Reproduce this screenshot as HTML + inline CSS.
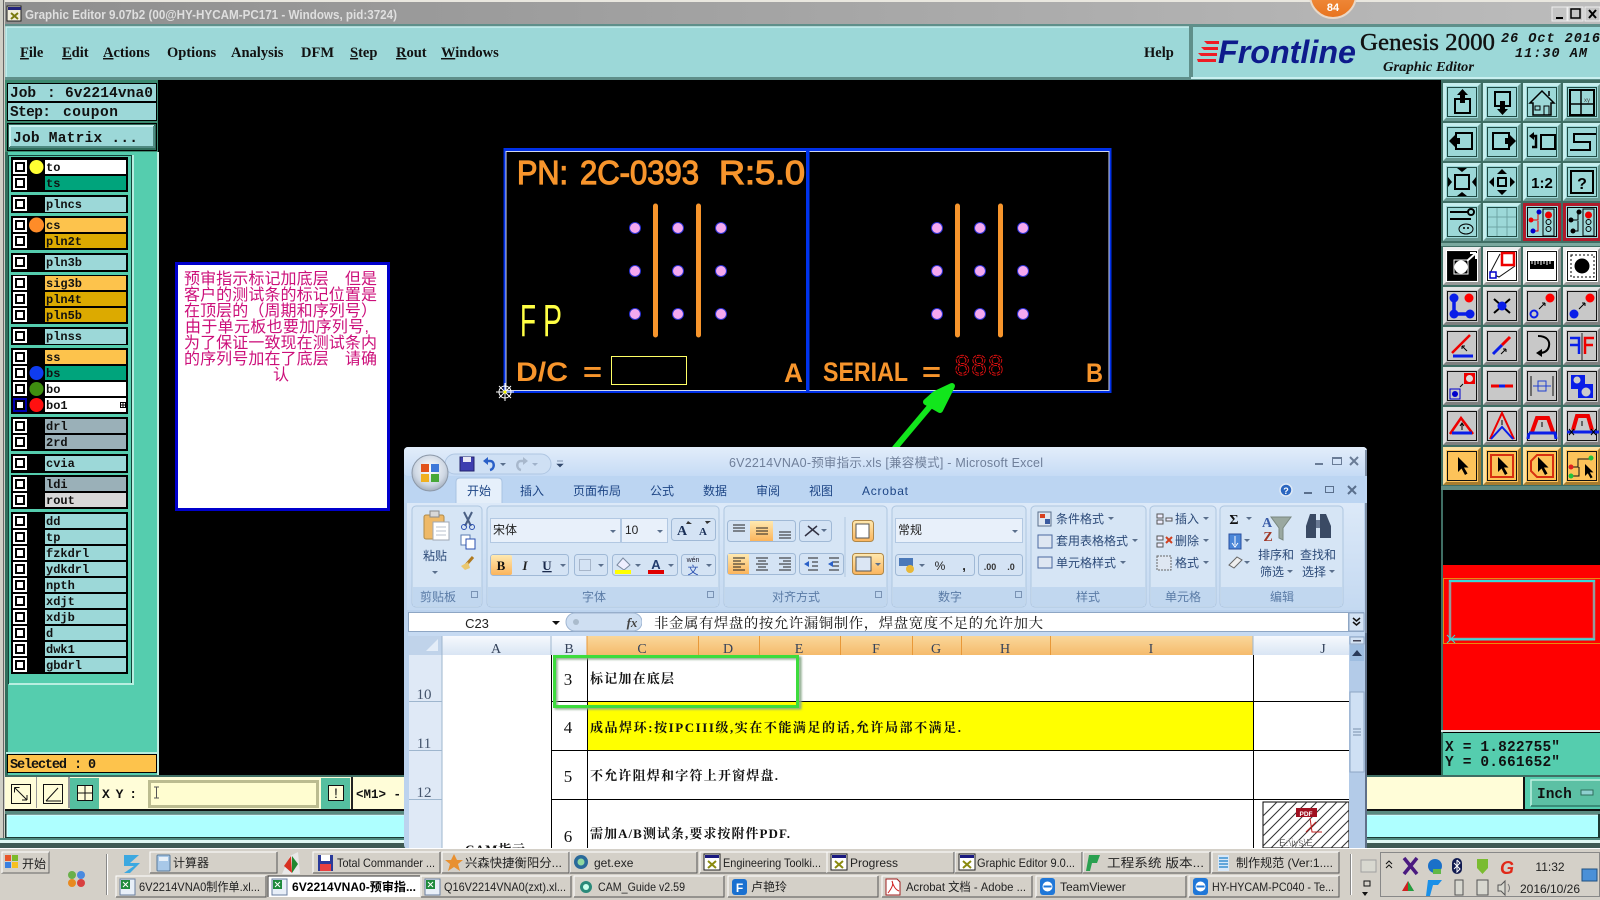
<!DOCTYPE html>
<html><head><meta charset="utf-8"><title>Graphic Editor</title>
<style>
html,body{margin:0;padding:0;background:#000;width:1600px;height:900px;overflow:hidden}
svg{display:block}
.s{font-family:"Liberation Sans","Noto Sans CJK SC",sans-serif}
.r{font-family:"Liberation Serif","Noto Serif CJK SC",serif}
.m{font-family:"Liberation Mono",monospace;font-weight:bold}
.lay{font-family:"Liberation Mono",monospace;font-weight:bold;font-size:12px;fill:#111}
.menu{font-family:"Liberation Serif",serif;font-weight:bold;font-size:14.5px;fill:#111}
.tb{font-family:"Liberation Sans","Noto Sans CJK SC",sans-serif;font-size:12px;fill:#222}
.rb{font-family:"Liberation Sans","Noto Sans CJK SC",sans-serif;font-size:12px;fill:#2c4a78}
.gl{font-family:"Liberation Sans","Noto Sans CJK SC",sans-serif;font-size:12px;fill:#5a7ba6;text-anchor:middle}
.tab{font-family:"Liberation Sans","Noto Sans CJK SC",sans-serif;font-size:12px;fill:#1d4585;text-anchor:middle}
.col{font-family:"Liberation Serif",serif;font-size:14px;fill:#34425a;text-anchor:middle}
.cell{font-family:"Liberation Serif","Noto Serif CJK SC",serif;font-weight:bold;font-size:13px;fill:#111}
.num{font-family:"Liberation Serif",serif;font-size:17px;fill:#111;text-anchor:middle}
.rh{font-family:"Liberation Serif",serif;font-size:15px;fill:#44546c;text-anchor:middle}
.note{font-family:"Liberation Sans","Noto Sans CJK SC",sans-serif;font-size:16px;fill:#cc0f7a}
.pcb{font-family:"Liberation Sans",sans-serif;font-weight:bold;fill:#f7952c}
</style></head><body>
<svg xmlns="http://www.w3.org/2000/svg" xmlns:xlink="http://www.w3.org/1999/xlink" width="1600" height="900" viewBox="0 0 1600 900">
<defs>
<linearGradient id="tg" x1="0" x2="1" y1="0" y2="0"><stop offset="0" stop-color="#8e8e8e"/><stop offset="1" stop-color="#bcbcbc"/></linearGradient>
<linearGradient id="xt" x1="0" x2="0" y1="0" y2="1"><stop offset="0" stop-color="#e2edfa"/><stop offset="1" stop-color="#c6dbf5"/></linearGradient>
<linearGradient id="rib" x1="0" x2="0" y1="0" y2="1"><stop offset="0" stop-color="#dce9f8"/><stop offset="1" stop-color="#c4d9f1"/></linearGradient>
<linearGradient id="og" x1="0" x2="0" y1="0" y2="1"><stop offset="0" stop-color="#ffe9b0"/><stop offset="1" stop-color="#fbb45c"/></linearGradient>
<linearGradient id="ch" x1="0" x2="0" y1="0" y2="1"><stop offset="0" stop-color="#f6f9fd"/><stop offset="1" stop-color="#d9e5f4"/></linearGradient>
<linearGradient id="cho" x1="0" x2="0" y1="0" y2="1"><stop offset="0" stop-color="#fad79a"/><stop offset="1" stop-color="#f5bb6c"/></linearGradient>
<linearGradient id="badge" x1="0" x2="0" y1="0" y2="1"><stop offset="0" stop-color="#f7a35a"/><stop offset="1" stop-color="#e8731e"/></linearGradient>
<radialGradient id="orb" cx=".5" cy=".4" r=".7"><stop offset="0" stop-color="#ffffff"/><stop offset=".6" stop-color="#cfd8e4"/><stop offset="1" stop-color="#8b97a6"/></radialGradient>
<filter id="gs" x="-5%" y="-10%" width="110%" height="125%"><feGaussianBlur stdDeviation="1"/></filter>
<g id="bT"><rect width="38" height="38" fill="#9cd8d8"/><path d="M0 38V0H38L35 3H3V35Z" fill="#c6eeee"/><path d="M38 0V38H0L3 35H35V3Z" fill="#6a9a94"/><rect x="4.500" y="4.500" width="29" height="29" fill="none" stroke="#1f4a44"/></g>
<g id="bG"><rect width="38" height="38" fill="#c8c8c8"/><path d="M0 38V0H38L35 3H3V35Z" fill="#e4e4e4"/><path d="M38 0V38H0L3 35H35V3Z" fill="#808080"/><rect x="4.500" y="4.500" width="29" height="29" fill="none" stroke="#111"/></g>
<g id="bO"><rect width="38" height="38" fill="#fdc35a"/><path d="M0 38V0H38L35 3H3V35Z" fill="#fde0a0"/><path d="M38 0V38H0L3 35H35V3Z" fill="#a67c30"/><rect x="4.500" y="4.500" width="29" height="29" fill="none" stroke="#111"/></g>
<g id="bW"><rect width="38" height="38" fill="#fff"/><path d="M0 38V0H38L35 3H3V35Z" fill="#eee"/><path d="M38 0V38H0L3 35H35V3Z" fill="#999"/><rect x="4.500" y="4.500" width="29" height="29" fill="none" stroke="#111"/></g>
<g id="ck"><rect width="14" height="14" fill="#fff"/><rect x="2" y="2" width="10" height="10" fill="#000"/><rect x="4" y="4" width="6" height="6" fill="#fff"/></g>
<path id="ptr" d="M0 0V15L3.500 11.500L7 18L9.500 16.500L6 10.500H10.500Z" fill="#000"/>
<g id="tbb"><rect width="127" height="21" fill="#d4d0c8"/><path d="M0 21V0H127" fill="none" stroke="#fff"/><path d="M127 0V21H0" fill="none" stroke="#555"/></g>
<g id="tbl"><rect width="150" height="21" fill="#d4d0c8"/><path d="M0 21V0H150" fill="none" stroke="#fff"/><path d="M150 0V21H0" fill="none" stroke="#555"/></g>
<g id="xl"><rect width="15" height="16" fill="#e8eff8" stroke="#6a7fa0"/><rect x="1" y="1" width="9" height="9" fill="#1e8b3c"/><path d="M3 3L8 8M8 3L3 8" stroke="#fff"/></g>
<g id="gex"><rect width="16" height="16" fill="#fff" stroke="#222"/><rect x="1" y="1" width="14" height="3" fill="#1a1a80"/><path d="M4 7L12 14M12 7L4 14" stroke="#8a8a10" stroke-width="2"/></g>
<g id="tv"><rect width="15" height="17" rx="3" fill="#1f77d8"/><circle cx="7.500" cy="8.500" r="5" fill="#fff"/><path d="M3.500 8.500H11.500" stroke="#1f77d8" stroke-width="2"/></g>
<path id="dd" d="M0 0H6L3 3Z" fill="#5a6f8c"/>
</defs>

<!-- base -->
<rect width="1600" height="900" fill="#000"/>
<rect width="1600" height="2" fill="#e9e7df"/>
<rect y="2" width="1600" height="23" fill="url(#tg)"/>
<rect x="0" y="0" width="5" height="848" fill="#cfcfc6"/>
<rect x="3" y="0" width="1" height="848" fill="#666"/>
<g transform="translate(7,6)"><rect width="14" height="15" fill="#f2eedc" stroke="#222"/><rect x="1" y="1" width="13" height="3" fill="#22227a"/><path d="M4 7L11 13M11 7L4 13" stroke="#7a7a10" stroke-width="2"/></g>
<text x="25" y="19" class="s" font-size="12.500" font-weight="bold" fill="#dfdfdf" textLength="372" lengthAdjust="spacingAndGlyphs">Graphic Editor 9.07b2 (00@HY-HYCAM-PC171 - Windows, pid:3724)</text>
<!-- window buttons -->
<g transform="translate(1552,7)"><rect width="15" height="14" fill="#c4c4c4" stroke="#eee"/><rect x="4" y="10" width="7" height="2" fill="#000"/><rect x="16" width="15" height="14" fill="#c4c4c4" stroke="#eee"/><rect x="19" y="2" width="9" height="9" fill="none" stroke="#000" stroke-width="1.500"/><rect x="33" width="15" height="14" fill="#c4c4c4" stroke="#eee"/><path d="M37 3L44 11M44 3L37 11" stroke="#000" stroke-width="2"/></g>
<!-- badge -->
<circle cx="1333" cy="-5" r="23" fill="url(#badge)" stroke="#e8d8c8" stroke-width="2"/>
<text x="1333" y="11" class="s" font-size="11" font-weight="bold" fill="#fff" text-anchor="middle">84</text>

<!-- menu -->
<rect x="5" y="24" width="1595" height="56" fill="#5f8f8a"/>
<rect x="6" y="27" width="1183" height="50" fill="#9cd8d8"/>
<path d="M6 77V27H1189" fill="none" stroke="#c9f0f0" stroke-width="1.500"/>
<rect x="1193" y="27" width="407" height="50" fill="#9cd8d8"/>
<rect x="1191" y="77" width="409" height="2" fill="#c9f0f0"/>
<rect x="6" y="77" width="1183" height="2" fill="#5f8f8a"/>
<g class="menu">
<text x="20" y="57"><tspan text-decoration="underline">F</tspan>ile</text>
<text x="62" y="57"><tspan text-decoration="underline">E</tspan>dit</text>
<text x="103" y="57"><tspan text-decoration="underline">A</tspan>ctions</text>
<text x="167" y="57">Options</text>
<text x="231" y="57">Analysis</text>
<text x="301" y="57">DFM</text>
<text x="350" y="57"><tspan text-decoration="underline">S</tspan>tep</text>
<text x="396" y="57"><tspan text-decoration="underline">R</tspan>out</text>
<text x="441" y="57"><tspan text-decoration="underline">W</tspan>indows</text>
<text x="1144" y="57">Help</text>
</g>
<!-- logo -->
<path d="M1204 41H1219V44H1207ZM1201 47H1218V50H1204ZM1198 53H1217V56H1201ZM1197 59H1216V62H1198Z" fill="#ee1c25"/>
<text x="1218" y="63" class="s" font-size="32" font-weight="bold" font-style="italic" fill="#0d1b8c" textLength="138" lengthAdjust="spacingAndGlyphs">Frontline</text>
<text x="1360" y="50" class="r" font-size="24" fill="#111" stroke="#111" stroke-width=".4" textLength="135" lengthAdjust="spacingAndGlyphs">Genesis 2000</text>
<text x="1383" y="71" class="r" font-size="14" font-style="italic" font-weight="bold" fill="#111" textLength="91" lengthAdjust="spacingAndGlyphs">Graphic Editor</text>
<text x="1501" y="42" class="m" font-style="italic" font-size="13.500" fill="#111" textLength="99">26 Oct 2016</text>
<text x="1515" y="57" class="m" font-style="italic" font-size="13.500" fill="#111" textLength="72">11:30 AM</text>

<!-- left panel -->
<rect x="5" y="80" width="153" height="72" fill="#3c8a70"/>
<rect x="7.500" y="83.500" width="149" height="18" fill="#9cd8d8" stroke="#000"/>
<rect x="7.500" y="102.500" width="149" height="18" fill="#9cd8d8" stroke="#000"/>
<text x="10" y="97" class="m" font-size="14.500" fill="#111">Job</text><text x="47" y="97" class="m" font-size="14.500" fill="#111">:</text><text x="65" y="97" class="m" font-size="14.500" fill="#111" textLength="88">6v2214vna0</text>
<text x="10" y="116" class="m" font-size="14.500" fill="#111" textLength="41">Step:</text><text x="63" y="116" class="m" font-size="14.500" fill="#111" textLength="55">coupon</text>
<rect x="7.500" y="123.500" width="149" height="27" fill="#2f6e5c" stroke="#000"/>
<rect x="10" y="126" width="144" height="21" fill="#9cd8d8"/><path d="M10 147V126H154" fill="none" stroke="#c9f0f0" stroke-width="2"/><path d="M154 126V147H10" fill="none" stroke="#4f8a82" stroke-width="2"/>
<text x="13" y="142" class="m" font-size="14.500" fill="#111" textLength="125">Job Matrix ...</text>

<rect x="5" y="152" width="153" height="625" fill="#55cdae"/>
<rect x="5" y="152" width="3" height="625" fill="#2f6e5c"/>
<rect x="157" y="152" width="2" height="625" fill="#c0ece0"/>
<path d="M8.500 683.500V155.500H131.500V683.500Z" fill="#55cdae" stroke="#15443a"/>
<rect x="132" y="155" width="2" height="529" fill="#b8eee0"/>
<rect x="9" y="683" width="125" height="2" fill="#b8eee0"/>
<rect x="6" y="752" width="152" height="2" fill="#b8eee0"/>
<rect x="7.500" y="754.500" width="149" height="18" fill="#fdc34c" stroke="#000"/>
<text x="10" y="768" class="m" font-size="13.500" fill="#111" textLength="57">Selected</text><text x="74" y="768" class="m" font-size="13.500" fill="#111">:</text><text x="88" y="768" class="m" font-size="13.500" fill="#111">0</text>

<!-- layer groups -->
<g fill="#000">
<rect x="11" y="157" width="117" height="35"/><rect x="11" y="195" width="117" height="18"/><rect x="11" y="216" width="117" height="34"/><rect x="11" y="253" width="117" height="19"/><rect x="11" y="275" width="117" height="49"/><rect x="11" y="327" width="117" height="18"/><rect x="11" y="348" width="117" height="66"/><rect x="11" y="417" width="117" height="34"/><rect x="11" y="454" width="117" height="19"/><rect x="11" y="475" width="117" height="34"/><rect x="11" y="512" width="117" height="162"/>
</g>
<g>
<rect x="45" y="160" width="81" height="14" fill="#fff"/><rect x="45" y="176" width="81" height="14" fill="#00a47c"/>
<rect x="45" y="197" width="81" height="15" fill="#9cd8d8"/>
<rect x="45" y="218" width="81" height="14" fill="#fdc34c"/><rect x="45" y="234" width="81" height="14" fill="#dcaa00"/>
<rect x="45" y="255" width="81" height="15" fill="#9cd8d8"/>
<rect x="45" y="276" width="81" height="14" fill="#fdc34c"/><rect x="45" y="292" width="81" height="14" fill="#dcaa00"/><rect x="45" y="308" width="81" height="14" fill="#dcaa00"/>
<rect x="45" y="329" width="81" height="15" fill="#9cd8d8"/>
<rect x="45" y="350" width="81" height="14" fill="#fdc34c"/><rect x="45" y="366" width="81" height="14" fill="#00a47c"/><rect x="45" y="382" width="81" height="14" fill="#fff"/><rect x="45" y="398" width="81" height="14" fill="#fff"/>
<rect x="45" y="419" width="81" height="14" fill="#9ab0b8"/><rect x="45" y="435" width="81" height="14" fill="#9ab0b8"/>
<rect x="45" y="456" width="81" height="15" fill="#9cd8d8"/>
<rect x="45" y="477" width="81" height="14" fill="#9ab0b8"/><rect x="45" y="493" width="81" height="14" fill="#d8d8d8"/>
<rect x="45" y="514" width="81" height="14" fill="#9cd8d8"/><rect x="45" y="530" width="81" height="14" fill="#9cd8d8"/><rect x="45" y="546" width="81" height="14" fill="#9cd8d8"/><rect x="45" y="562" width="81" height="14" fill="#9cd8d8"/><rect x="45" y="578" width="81" height="14" fill="#9cd8d8"/><rect x="45" y="594" width="81" height="14" fill="#9cd8d8"/><rect x="45" y="610" width="81" height="14" fill="#9cd8d8"/><rect x="45" y="626" width="81" height="14" fill="#9cd8d8"/><rect x="45" y="642" width="81" height="14" fill="#9cd8d8"/><rect x="45" y="658" width="81" height="14" fill="#9cd8d8"/>
</g>
<g>
<use xlink:href="#ck" x="13" y="160"/><use xlink:href="#ck" x="13" y="176"/><use xlink:href="#ck" x="13" y="197"/><use xlink:href="#ck" x="13" y="218"/><use xlink:href="#ck" x="13" y="234"/><use xlink:href="#ck" x="13" y="255"/><use xlink:href="#ck" x="13" y="276"/><use xlink:href="#ck" x="13" y="292"/><use xlink:href="#ck" x="13" y="308"/><use xlink:href="#ck" x="13" y="329"/><use xlink:href="#ck" x="13" y="350"/><use xlink:href="#ck" x="13" y="366"/><use xlink:href="#ck" x="13" y="382"/>
<rect x="13" y="398" width="14" height="14" fill="#0000b0"/><rect x="15" y="400" width="10" height="10" fill="#000"/><rect x="17" y="402" width="6" height="6" fill="#fff"/>
<use xlink:href="#ck" x="13" y="419"/><use xlink:href="#ck" x="13" y="435"/><use xlink:href="#ck" x="13" y="456"/><use xlink:href="#ck" x="13" y="477"/><use xlink:href="#ck" x="13" y="493"/><use xlink:href="#ck" x="13" y="514"/><use xlink:href="#ck" x="13" y="530"/><use xlink:href="#ck" x="13" y="546"/><use xlink:href="#ck" x="13" y="562"/><use xlink:href="#ck" x="13" y="578"/><use xlink:href="#ck" x="13" y="594"/><use xlink:href="#ck" x="13" y="610"/><use xlink:href="#ck" x="13" y="626"/><use xlink:href="#ck" x="13" y="642"/><use xlink:href="#ck" x="13" y="658"/>
</g>
<circle cx="36.500" cy="167" r="7" fill="#ffff33"/><circle cx="36.500" cy="225" r="7.500" fill="#ff8c28"/><circle cx="36.500" cy="373" r="7" fill="#0f3cf0"/><circle cx="36.500" cy="389" r="7" fill="#3f8f10"/><circle cx="36.500" cy="405" r="7" fill="#ff1010"/>
<g class="lay">
<text x="46" y="171">to</text><text x="46" y="187">ts</text><text x="46" y="208">plncs</text><text x="46" y="229">cs</text><text x="46" y="245">pln2t</text><text x="46" y="266">pln3b</text><text x="46" y="287">sig3b</text><text x="46" y="303">pln4t</text><text x="46" y="319">pln5b</text><text x="46" y="340">plnss</text><text x="46" y="361">ss</text><text x="46" y="377">bs</text><text x="46" y="393">bo</text><text x="46" y="409">bo1</text><text x="46" y="430">drl</text><text x="46" y="446">2rd</text><text x="46" y="467">cvia</text><text x="46" y="488">ldi</text><text x="46" y="504">rout</text><text x="46" y="525">dd</text><text x="46" y="541">tp</text><text x="46" y="557">fzkdrl</text><text x="46" y="573">ydkdrl</text><text x="46" y="589">npth</text><text x="46" y="605">xdjt</text><text x="46" y="621">xdjb</text><text x="46" y="637">d</text><text x="46" y="653">dwk1</text><text x="46" y="669">gbdrl</text>
</g>
<path d="M120.500 402.500h5v5h-5zM123 402.500v5M120.500 405h5" fill="none" stroke="#000"/>

<!-- PCB board -->
<rect x="505" y="149.500" width="605" height="242" fill="none" stroke="#0030e8" stroke-width="3"/>
<rect x="506" y="151.500" width="603" height="239" fill="none" stroke="#cfd6ee" stroke-width="1"/>
<rect x="806" y="151" width="3.500" height="240" fill="#0033ee"/>
<g class="pcb" font-size="33" stroke="#f7952c" stroke-width="1.200" style="font-weight:normal">
<text x="517" y="184" textLength="51" lengthAdjust="spacingAndGlyphs">PN:</text>
<text x="580" y="184" textLength="119" lengthAdjust="spacingAndGlyphs">2C-0393</text>
<text x="719" y="184" textLength="86" lengthAdjust="spacingAndGlyphs">R:5.0</text>
</g>
<text x="520" y="336" class="s" font-size="45" fill="#ffff44" textLength="16" lengthAdjust="spacingAndGlyphs">F</text>
<text x="543" y="336" class="s" font-size="45" fill="#ffff44" textLength="19" lengthAdjust="spacingAndGlyphs">P</text>
<g class="pcb" font-size="27">
<text x="516" y="381" textLength="52" lengthAdjust="spacingAndGlyphs">D/C</text>
<text x="583" y="381" textLength="19" lengthAdjust="spacingAndGlyphs">=</text>
<text x="784" y="382" textLength="19" lengthAdjust="spacingAndGlyphs">A</text>
<text x="823" y="381" textLength="85" lengthAdjust="spacingAndGlyphs">SERIAL</text>
<text x="922" y="381" textLength="19" lengthAdjust="spacingAndGlyphs">=</text>
<text x="1086" y="382" textLength="17" lengthAdjust="spacingAndGlyphs">B</text>
</g>
<rect x="611.500" y="356.500" width="75" height="28" fill="none" stroke="#ffff66"/>
<text x="954" y="375" class="m" font-size="30" fill="none" stroke="#e01010" stroke-width="1" stroke-dasharray="4 1" textLength="50" lengthAdjust="spacingAndGlyphs" style="font-weight:normal">888</text>
<g fill="#f4a8ef" stroke="#2a30d0" stroke-width="1">
<circle cx="635" cy="228" r="5.500"/><circle cx="678" cy="228" r="5.500"/><circle cx="721" cy="228" r="5.500"/>
<circle cx="635" cy="271" r="5.500"/><circle cx="678" cy="271" r="5.500"/><circle cx="721" cy="271" r="5.500"/>
<circle cx="635" cy="314" r="5.500"/><circle cx="678" cy="314" r="5.500"/><circle cx="721" cy="314" r="5.500"/>
<circle cx="937" cy="228" r="5.500"/><circle cx="980" cy="228" r="5.500"/><circle cx="1023" cy="228" r="5.500"/>
<circle cx="937" cy="271" r="5.500"/><circle cx="980" cy="271" r="5.500"/><circle cx="1023" cy="271" r="5.500"/>
<circle cx="937" cy="314" r="5.500"/><circle cx="980" cy="314" r="5.500"/><circle cx="1023" cy="314" r="5.500"/>
</g>
<g stroke="#f7952c" stroke-width="5" stroke-linecap="round"><path d="M655.500 206V335M698.500 206V335M957.500 206V335M1000.500 206V335"/></g>
<!-- crosshair -->
<g stroke="#fff" fill="none"><circle cx="505" cy="392" r="6"/><path d="M505 383V401M496 392H514M499 386L511 398M511 386L499 398"/></g><circle cx="505" cy="392" r="1.500" fill="#ff0"/>
<!-- green arrow -->
<path d="M895 448L932 404M952 386L935 394L926 402L940 410Z" stroke="#12e61c" stroke-width="6" fill="#12e61c" stroke-linecap="round" stroke-linejoin="round"/>

<!-- note -->
<rect x="176.500" y="263.500" width="212" height="246" fill="#fff" stroke="#0000cc" stroke-width="3"/>
<g class="note">
<text x="184" y="284" textLength="193">预审指示标记加底层　但是</text>
<text x="184" y="300" textLength="193">客户的测试条的标记位置是</text>
<text x="184" y="316" textLength="193">在顶层的（周期和序列号）</text>
<text x="185" y="332" textLength="184">由于单元板也要加序列号,</text>
<text x="184" y="348" textLength="193">为了保证一致现在测试条内</text>
<text x="184" y="364" textLength="193">的序列号加在了底层　请确</text>
<text x="273" y="380">认</text>
</g>

<!-- right toolbar -->
<rect x="1441" y="80" width="159" height="410" fill="#3f6e64"/>
<rect x="1441" y="243" width="159" height="3" fill="#7aa89e"/>
<rect x="1441" y="486" width="159" height="4" fill="#5f8a80"/>
<rect x="1441" y="490" width="2" height="243" fill="#3f6e64"/>
<rect x="1443" y="565" width="157" height="165" fill="#ff0000"/>
<rect x="1443.500" y="578.500" width="157" height="65" fill="none" stroke="#e88a10"/>
<rect x="1450" y="581" width="144" height="58" fill="none" stroke="#999" stroke-width="2.500"/>
<path d="M1449 581H1595M1449 639.500H1595" stroke="#3ad8d8" stroke-width="2"/>
<path d="M1447 635L1455 643M1455 635L1447 643" stroke="#3ad8d8"/>
<rect x="1441" y="730" width="159" height="2" fill="#d8e8e4"/>
<rect x="1441" y="733" width="159" height="44" fill="#55cdae"/>
<rect x="1441" y="733" width="2" height="44" fill="#2f6e5c"/>
<text x="1445" y="751" class="m" font-size="14.500" fill="#111" textLength="115">X = 1.822755"</text>
<text x="1445" y="766" class="m" font-size="14.500" fill="#111" textLength="115">Y = 0.661652"</text>

<!-- teal buttons -->
<g>
<g transform="translate(1443,83)"><use xlink:href="#bT"/><path d="M12 16H27V30H12Z" fill="none" stroke="#000" stroke-width="2"/><path d="M19.500 6L25 12H22V20H17V12H14Z"/></g>
<g transform="translate(1483,83)"><use xlink:href="#bT"/><path d="M12 9H27V23H12Z" fill="none" stroke="#000" stroke-width="2"/><path d="M19.500 32L14 26H17V18H22V26H25Z"/></g>
<g transform="translate(1523,83)"><use xlink:href="#bT"/><path d="M19 8L7 20H10V32H28V20H31ZM26 8V13" fill="none" stroke="#000" stroke-width="1.500"/><rect x="21" y="23" width="5" height="9" fill="none" stroke="#000"/><rect x="12" y="23" width="5" height="4" fill="none" stroke="#000"/></g>
<g transform="translate(1563,83)"><use xlink:href="#bT"/><rect x="7" y="7" width="24" height="25" fill="none" stroke="#000" stroke-width="2"/><path d="M7 21H31M18 7V32" stroke="#000" stroke-width="1.500"/><text x="21" y="19" font-size="6" class="s" fill="#444">xy</text></g>

<g transform="translate(1443,123)"><use xlink:href="#bT"/><path d="M13 10H29V26H13Z" fill="none" stroke="#000" stroke-width="2"/><path d="M6 18L12 12V15H17V21H12V24Z"/></g>
<g transform="translate(1483,123)"><use xlink:href="#bT"/><path d="M10 10H26V26H10Z" fill="none" stroke="#000" stroke-width="2"/><path d="M33 18L27 12V15H22V21H27V24Z"/></g>
<g transform="translate(1523,123)"><use xlink:href="#bT"/><rect x="18" y="12" width="14" height="14" fill="none" stroke="#000" stroke-width="2"/><path d="M8 13H13V24H9" fill="none" stroke="#000" stroke-width="2.500"/><path d="M6 13L11 9V17Z"/></g>
<g transform="translate(1563,123)"><use xlink:href="#bT"/><path d="M33 11H11V19H27V27H7" fill="none" stroke="#000" stroke-width="2"/></g>

<g transform="translate(1443,163)"><use xlink:href="#bT"/><rect x="12" y="12" width="14" height="14" fill="none" stroke="#000" stroke-width="2"/><path d="M14 5H24L19 9ZM14 33H24L19 29ZM5 14V24L9 19ZM33 14V24L29 19Z"/></g>
<g transform="translate(1483,163)"><use xlink:href="#bT"/><rect x="15" y="15" width="8" height="8" fill="none" stroke="#000" stroke-width="2"/><path d="M19 6L14 11H24ZM19 32L14 27H24ZM6 19L11 14V24ZM32 19L27 14V24Z"/></g>
<g transform="translate(1523,163)"><use xlink:href="#bT"/><text x="19" y="25" class="s" font-size="15" font-weight="bold" text-anchor="middle">1:2</text></g>
<g transform="translate(1563,163)"><use xlink:href="#bT"/><rect x="8" y="8" width="22" height="22" fill="none" stroke="#000" stroke-width="2"/><text x="19" y="26" class="s" font-size="16" font-weight="bold" text-anchor="middle">?</text></g>

<g transform="translate(1443,203)"><use xlink:href="#bT"/><path d="M7 9H25M7 16H28" stroke="#000" stroke-width="2"/><circle cx="28" cy="9" r="3" fill="none" stroke="#000" stroke-width="2"/><ellipse cx="23" cy="26" rx="7" ry="5" fill="none" stroke="#000"/><circle cx="21" cy="25" r="1"/><circle cx="25" cy="25" r="1"/></g>
<g transform="translate(1483,203)"><use xlink:href="#bT"/><path d="M14 5V33M24 5V33M5 14H33M5 24H33" stroke="#6fa6a6"/></g>
<g transform="translate(1523,203)"><rect width="38" height="38" fill="#b01c2c"/><rect x="3" y="3" width="32" height="32" fill="#9cd8d8"/><rect x="4.500" y="4.500" width="29" height="29" fill="none" stroke="#000"/><path d="M6 17H15V8M15 18V28H8" stroke="#e00" fill="none"/><circle cx="8" cy="17" r="2.500" fill="#e00"/><circle cx="16" cy="9" r="2.500" fill="#00c"/><circle cx="10" cy="28" r="2.500" fill="#00c"/><rect x="20" y="6" width="11" height="27" fill="none" stroke="#000"/><circle cx="25.500" cy="12" r="3.500" fill="#e00"/><circle cx="25.500" cy="19" r="2.500" fill="none" stroke="#000"/><circle cx="25.500" cy="26" r="2.500" fill="none" stroke="#000"/></g>
<g transform="translate(1563,203)"><rect width="38" height="38" fill="#b01c2c"/><rect x="3" y="3" width="32" height="32" fill="#9cd8d8"/><rect x="4.500" y="4.500" width="29" height="29" fill="none" stroke="#000"/><path d="M6 17H15V8M15 18V28H8" stroke="#000" fill="none"/><circle cx="8" cy="17" r="2.500"/><circle cx="16" cy="9" r="2.500"/><circle cx="10" cy="28" r="2.500"/><rect x="20" y="6" width="11" height="27" fill="none" stroke="#000"/><circle cx="25.500" cy="12" r="3.500" fill="#e00"/><circle cx="25.500" cy="19" r="2.500" fill="none" stroke="#000"/><circle cx="25.500" cy="26" r="2.500" fill="none" stroke="#000"/></g>
</g>
<!-- second group -->
<g>
<g transform="translate(1443,247)"><use xlink:href="#bW"/><rect x="5" y="5" width="29" height="28"/><circle cx="18" cy="20" r="6.500" fill="#fff"/><path d="M24 14L33 6M33 6H27M33 6V12" stroke="#fff" stroke-width="2" fill="none"/><rect x="11" y="13" width="14" height="14" fill="none" stroke="#fff"/></g>
<g transform="translate(1483,247)"><use xlink:href="#bW"/><path d="M17 7L7 26L16 30L32 19" fill="none" stroke="#111"/><rect x="19" y="6" width="12" height="12" fill="#fff" stroke="#e00" stroke-width="2.500"/><rect x="7" y="25" width="6" height="6" fill="#fff" stroke="#00c" stroke-width="1.500"/></g>
<g transform="translate(1523,247)"><use xlink:href="#bW"/><rect x="7" y="14" width="24" height="8"/><path d="M9 14V17M12 14V18M15 14V17M18 14V18M21 14V17M24 14V18M27 14V17" stroke="#fff"/></g>
<g transform="translate(1563,247)"><use xlink:href="#bW"/><rect x="8" y="8" width="23" height="22" fill="none" stroke="#000" stroke-dasharray="2 2"/><circle cx="19" cy="19" r="7.500"/></g>

<g transform="translate(1443,287)"><use xlink:href="#bG"/><path d="M11 11V27H27" fill="none" stroke="#0a1ee8" stroke-width="3.500"/><circle cx="11" cy="11" r="4.500" fill="#0a1ee8"/><circle cx="11" cy="27" r="4.500" fill="#0a1ee8"/><circle cx="27" cy="27" r="4.500" fill="#0a1ee8"/><circle cx="26" cy="11" r="4.500" fill="#f00"/></g>
<g transform="translate(1483,287)"><use xlink:href="#bG"/><path d="M11 12L27 26M27 12L11 26" stroke="#000" stroke-width="2"/><circle cx="19" cy="19" r="4.500" fill="#0a1ee8"/></g>
<g transform="translate(1523,287)"><use xlink:href="#bG"/><circle cx="27" cy="11" r="4.500" fill="#f00"/><circle cx="11" cy="27" r="3.500" fill="none" stroke="#0a1ee8" stroke-width="2"/><path d="M16 22L22 16M22 16H19M22 16V19" stroke="#000" fill="none"/></g>
<g transform="translate(1563,287)"><use xlink:href="#bG"/><circle cx="27" cy="11" r="4.500" fill="#f00"/><circle cx="11" cy="27" r="4.500" fill="#0a1ee8"/><path d="M16 22L22 16M22 16H19M22 16V19" stroke="#000" fill="none"/></g>

<g transform="translate(1443,327)"><use xlink:href="#bG"/><path d="M9 26L27 8" stroke="#e00" stroke-width="2.500"/><path d="M10 29H30" stroke="#0a1ee8" stroke-width="3"/><path d="M24 24L19 19M19 19H22M19 19V22" stroke="#000" fill="none"/></g>
<g transform="translate(1483,327)"><use xlink:href="#bG"/><path d="M10 27L19 18" stroke="#0a1ee8" stroke-width="3"/><path d="M19 18L27 10" stroke="#e00" stroke-width="3"/><path d="M18 27L23 22M23 22H20M23 22V25" stroke="#000" fill="none"/></g>
<g transform="translate(1523,327)"><use xlink:href="#bG"/><path d="M15 9C24 9 27 14 26 19C25 24 21 26 16 26" fill="none" stroke="#000" stroke-width="2"/><path d="M13 26L19 22V30Z"/></g>
<g transform="translate(1563,327)"><use xlink:href="#bG"/><path d="M7 11H16V27M7 18H15" fill="none" stroke="#0a1ee8" stroke-width="2.500"/><path d="M19 6V33" stroke="#222"/><path d="M31 11H22V27M22 18H30" fill="none" stroke="#e00" stroke-width="2.500"/></g>

<g transform="translate(1443,367)"><use xlink:href="#bG"/><rect x="21" y="6" width="11" height="11" fill="#e00"/><circle cx="26.500" cy="11.500" r="3.500" fill="#ddd"/><rect x="7" y="22" width="10" height="10" fill="none" stroke="#00c"/><circle cx="12" cy="27" r="3" fill="#00c"/><path d="M17 20L20 17" stroke="#000"/></g>
<g transform="translate(1483,367)"><use xlink:href="#bG"/><path d="M8 19H30" stroke="#e00" stroke-width="3"/><path d="M16 19H22" stroke="#0a1ee8" stroke-width="3"/></g>
<g transform="translate(1523,367)"><use xlink:href="#bG"/><path d="M8 9V29M30 9V29" stroke="#111"/><path d="M10 19H28" stroke="#2040d0"/><rect x="15" y="14" width="8" height="10" fill="none" stroke="#2040d0"/></g>
<g transform="translate(1563,367)"><use xlink:href="#bG"/><rect x="8" y="8" width="14" height="14" fill="#0a1ee8"/><rect x="15" y="17" width="15" height="14" fill="#0a1ee8"/><circle cx="14" cy="13" r="3.500" fill="#ccc"/><circle cx="23" cy="25" r="4.500" fill="#ccc"/></g>

<g transform="translate(1443,407)"><use xlink:href="#bG"/><path d="M7 27L18 11L30 27" fill="none" stroke="#e00" stroke-width="2.500"/><path d="M9 26H29" stroke="#0a1ee8" stroke-width="3"/><path d="M19 23V17M17 19L19 16L21 19" stroke="#000" fill="none"/></g>
<g transform="translate(1483,407)"><use xlink:href="#bG"/><path d="M7 32L19 6L31 32" fill="none" stroke="#e00" stroke-width="2"/><path d="M8 32L19 20L30 32" fill="none" stroke="#0a1ee8" stroke-width="2"/><path d="M19 18V13" stroke="#000"/></g>
<g transform="translate(1523,407)"><use xlink:href="#bG"/><path d="M9 25L14 11H25L30 25" fill="none" stroke="#e00" stroke-width="4"/><path d="M6 26H32L33 32M6 26L5 32" fill="none" stroke="#0a1ee8" stroke-width="3"/><path d="M19 20V15" stroke="#000"/></g>
<g transform="translate(1563,407)"><use xlink:href="#bG"/><path d="M10 23L14 9H25L29 23" fill="none" stroke="#e00" stroke-width="4"/><path d="M4 25H36" stroke="#0a1ee8" stroke-width="3"/><path d="M6 22L11 28M11 22L6 28M28 22L33 28M33 22L28 28" stroke="#000"/><path d="M19 19V14" stroke="#000"/></g>

<g transform="translate(1443,447)"><use xlink:href="#bO"/><use xlink:href="#ptr" x="15" y="10"/></g>
<g transform="translate(1483,447)"><use xlink:href="#bO"/><rect x="8" y="8" width="22" height="22" fill="none" stroke="#d83010" stroke-width="2"/><use xlink:href="#ptr" x="15" y="10"/></g>
<g transform="translate(1523,447)"><use xlink:href="#bO"/><path d="M14 8H30V30H14L8 24V14Z" fill="none" stroke="#d83010" stroke-width="2"/><use xlink:href="#ptr" x="15" y="10"/></g>
<g transform="translate(1563,447)"><use xlink:href="#bO"/><path d="M9 20H15V12H26" fill="none" stroke="#111"/><path d="M10 29H16V20" fill="none" stroke="#111"/><circle cx="8" cy="20" r="2.500" fill="#e02020"/><circle cx="8" cy="29" r="2.500" fill="#22c33c"/><circle cx="28" cy="11" r="2.500" fill="#22c33c"/><use xlink:href="#ptr" transform="translate(22,17) scale(.8)"/></g>
</g>

<!-- bottom bars -->
<rect x="5" y="775" width="1595" height="2" fill="#3f6e64"/>
<rect x="5" y="777" width="1595" height="32" fill="#fffdd8"/>
<rect x="5" y="809" width="1595" height="5" fill="#5a8a80"/>
<rect x="5" y="809" width="1595" height="2" fill="#111"/>
<rect x="5" y="814" width="1595" height="26" fill="#1a3a34"/>
<rect x="7" y="815" width="1591" height="22" fill="#aeffff"/>
<path d="M7 837V815H1598" fill="none" stroke="#e0ffff"/>
<rect x="0" y="838" width="1600" height="2" fill="#4f8a80"/>
<rect x="0" y="840" width="1600" height="3" fill="#e0f8f4"/>
<rect x="0" y="843" width="1600" height="5" fill="#3f5a54"/>
<rect x="36" y="777" width="1" height="31" fill="#999"/>
<rect x="68" y="777" width="2" height="31" fill="#999"/>
<g fill="none" stroke="#111"><rect x="11.500" y="784.500" width="19" height="19"/><path d="M14.500 787.500L27 800M14.500 787.500h5M14.500 787.500v5M27 800h-5M27 800v-5"/><rect x="43.500" y="784.500" width="19" height="19"/><path d="M46 801H61M46 801L58 788"/></g>
<rect x="70" y="778" width="29" height="31" fill="#55bfa0"/><rect x="77.500" y="785.500" width="15" height="15" fill="#fffdd8" stroke="#111"/><path d="M77.500 793H92.500M85 785.500V800.500" stroke="#111"/>
<text x="102" y="798" class="m" font-size="13" fill="#111" textLength="35">X Y :</text>
<rect x="149.500" y="781.500" width="168" height="25" fill="#fffdd0" stroke="#bcbc90" stroke-width="3"/>
<path d="M154 787H159M154 798H159M156.500 787V798" stroke="#555"/>
<rect x="321" y="778" width="29" height="31" fill="#55bfa0"/><rect x="328.500" y="785.500" width="15" height="15" fill="#fffdd8" stroke="#111"/><text x="336" y="798" class="s" font-size="14" fill="#111" text-anchor="middle">!</text>
<rect x="351" y="777" width="2" height="32" fill="#222"/>
<text x="356" y="798" class="m" font-size="12.500" fill="#111">&lt;M1&gt; -</text>
<rect x="1523" y="777" width="2" height="33" fill="#111"/>
<rect x="1525" y="777" width="75" height="32" fill="#55cdae"/>
<rect x="1531" y="780" width="69" height="26" fill="#5cc0a4"/><path d="M1531 806V780H1600" stroke="#c0f0e0" fill="none" stroke-width="1.500"/><path d="M1531 806H1600" stroke="#2f7a68" stroke-width="1.500"/>
<text x="1537" y="798" class="m" font-size="14.500" fill="#111">Inch</text>
<rect x="1581" y="790" width="12" height="5" fill="#8fd0d0" stroke="#2f6e5c"/>

<!-- Excel window -->
<rect x="404" y="447" width="963" height="402" rx="4" fill="#bcd3ee"/>
<rect x="404" y="447" width="963" height="29" rx="4" fill="url(#xt)"/>
<rect x="1365" y="450" width="2" height="398" fill="#7d8ea4"/>
<rect x="404" y="476" width="963" height="27" fill="#bcd5f2"/>
<!-- orb / QAT -->
<rect x="445" y="454" width="106" height="20" rx="10" fill="#cfe0f4" stroke="#afc6e2"/>
<circle cx="430" cy="473" r="18" fill="url(#orb)" stroke="#8c98a8"/>
<rect x="421" y="464" width="8" height="8" fill="#e2531a"/><rect x="431" y="464" width="8" height="8" fill="#3e78d8"/><rect x="421" y="474" width="8" height="8" fill="#f0b020"/><rect x="431" y="474" width="8" height="8" fill="#48a838"/>
<rect x="460" y="457" width="14" height="14" fill="#3e3eb0" stroke="#22226c"/><rect x="463" y="457" width="8" height="5" fill="#e8e8f4"/>
<path d="M485 461H490C495 461 495 469 490 470" fill="none" stroke="#2a60c8" stroke-width="2.500"/><path d="M483 461L488 457V465Z" fill="#2a60c8"/>
<use xlink:href="#dd" x="500" y="463"/>
<path d="M526 461H521C516 461 516 469 521 470" fill="none" stroke="#a8b8cc" stroke-width="2.500"/><path d="M528 461L523 457V465Z" fill="#a8b8cc"/>
<use xlink:href="#dd" x="532" y="463" opacity=".4"/>
<path d="M557 461H563M557 464H563L560 467Z" fill="#33496c" stroke="#33496c" stroke-width=".6"/>
<text x="729" y="467" class="s" font-size="12.500" fill="#6f7f9a" textLength="314">6V2214VNA0-预审指示.xls  [兼容模式] - Microsoft Excel</text>
<g fill="#6a7c96"><rect x="1315" y="463" width="8" height="2"/><rect x="1332.500" y="457.500" width="9" height="7" fill="none" stroke="#6a7c96"/><rect x="1332" y="457" width="10" height="2"/></g>
<path d="M1350 457L1358 465M1358 457L1350 465" stroke="#6a7c96" stroke-width="2"/>
<!-- tabs -->
<path d="M456 503V482Q456 478 460 478H498Q502 478 502 482V503Z" fill="#e6f0fb" stroke="#a9c3e2"/>
<rect x="456.500" y="500" width="45" height="4" fill="#e4eef9"/>
<text x="479" y="495" class="tab">开始</text><text x="532" y="495" class="tab">插入</text><text x="597" y="495" class="tab">页面布局</text><text x="662" y="495" class="tab">公式</text><text x="715" y="495" class="tab">数据</text><text x="768" y="495" class="tab">审阅</text><text x="821" y="495" class="tab">视图</text><text x="885" y="495" class="tab" font-size="13" textLength="46">Acrobat</text>
<circle cx="1286" cy="490" r="6" fill="#2a66c0" stroke="#dfe9f5" stroke-width="1.500"/><text x="1286" y="494" class="s" font-size="9" font-weight="bold" fill="#fff" text-anchor="middle">?</text>
<rect x="1304" y="492" width="8" height="2" fill="#5a6f8c"/><rect x="1325.500" y="486.500" width="8" height="6" fill="none" stroke="#5a6f8c"/><path d="M1348 486L1356 494M1356 486L1348 494" stroke="#5a6f8c" stroke-width="2"/>
<!-- ribbon -->
<rect x="407" y="503" width="957" height="107" fill="url(#rib)"/>
<g fill="#d6e5f5" stroke="#aec6e0">
<rect x="412" y="506" width="70" height="101" rx="4"/><rect x="487" y="506" width="232" height="101" rx="4"/><rect x="724" y="506" width="163" height="101" rx="4"/><rect x="892" y="506" width="134" height="101" rx="4"/><rect x="1031" y="506" width="115" height="101" rx="4"/><rect x="1150" y="506" width="66" height="101" rx="4"/><rect x="1220" y="506" width="123" height="101" rx="4"/>
</g>
<g fill="#c1d7ef">
<rect x="413" y="587" width="68" height="19"/><rect x="488" y="587" width="230" height="19"/><rect x="725" y="587" width="161" height="19"/><rect x="893" y="587" width="132" height="19"/><rect x="1032" y="587" width="113" height="19"/><rect x="1151" y="587" width="64" height="19"/><rect x="1221" y="587" width="121" height="19"/>
</g>
<text x="438" y="601" class="gl">剪贴板</text><text x="594" y="601" class="gl">字体</text><text x="796" y="601" class="gl">对齐方式</text><text x="950" y="601" class="gl">数字</text><text x="1088" y="601" class="gl">样式</text><text x="1183" y="601" class="gl">单元格</text><text x="1282" y="601" class="gl">编辑</text>
<g fill="none" stroke="#7a93b4"><rect x="471.500" y="591.500" width="6" height="6"/><rect x="707.500" y="591.500" width="6" height="6"/><rect x="875.500" y="591.500" width="6" height="6"/><rect x="1015.500" y="591.500" width="6" height="6"/></g>
<!-- clipboard -->
<rect x="424" y="515" width="20" height="24" rx="2" fill="#eeb968" stroke="#b08a48"/><rect x="430" y="511" width="9" height="6" fill="#d8d8d8" stroke="#8a8a8a"/><rect x="433" y="522" width="16" height="18" fill="#fff" stroke="#a0a8b4"/><path d="M436 527H446M436 531H446M436 535H446" stroke="#b8c0cc"/>
<text x="435" y="560" class="rb" text-anchor="middle">粘贴</text><use xlink:href="#dd" x="432" y="571"/>
<path d="M464 512L471 526M472 512L465 526" stroke="#4a5f84" stroke-width="2"/><circle cx="464" cy="527" r="2.500" fill="none" stroke="#2a4fb0"/><circle cx="472" cy="527" r="2.500" fill="none" stroke="#2a4fb0"/>
<rect x="461" y="535" width="9" height="10" fill="#fff" stroke="#5a7ab0"/><rect x="466" y="539" width="9" height="10" fill="#fff" stroke="#2a4fb0"/>
<path d="M473 557L466 565" stroke="#b07a20" stroke-width="3"/><path d="M461 566L468 562L470 568L465 570Z" fill="#eac870"/>
<!-- font -->
<rect x="490.500" y="518.500" width="130" height="24" fill="#e8f0fa" stroke="#b2c8e2"/><rect x="621.500" y="518.500" width="46" height="24" fill="#e8f0fa" stroke="#b2c8e2"/>
<text x="493" y="534" class="s" font-size="12" fill="#222">宋体</text><use xlink:href="#dd" x="610" y="530"/><text x="625" y="534" class="s" font-size="12" fill="#222">10</text><use xlink:href="#dd" x="657" y="530"/>
<rect x="671.500" y="518.500" width="44" height="22" rx="3" fill="#d4e3f4" stroke="#a0b9d6"/>
<text x="682" y="535" class="r" font-size="14" font-weight="bold" fill="#1a3058" text-anchor="middle">A</text><text x="703" y="535" class="r" font-size="11" font-weight="bold" fill="#1a3058" text-anchor="middle">A</text><path d="M688 521L692 524H686ZM707 524L711 521H705Z" fill="#333"/>
<rect x="490.500" y="554.500" width="78" height="21" rx="3" fill="#d4e3f4" stroke="#a0b9d6"/><rect x="491" y="555" width="21" height="20" rx="2" fill="url(#og)"/>
<text x="501" y="570" class="r" font-size="13" font-weight="bold" fill="#111" text-anchor="middle">B</text><text x="525" y="570" class="r" font-size="13" font-style="italic" font-weight="bold" fill="#222" text-anchor="middle">I</text><text x="547" y="570" class="r" font-size="13" font-weight="bold" text-decoration="underline" fill="#1a2a4c" text-anchor="middle">U</text><use xlink:href="#dd" x="560" y="564"/>
<rect x="574.500" y="554.500" width="33" height="21" rx="3" fill="#d4e3f4" stroke="#a0b9d6"/><rect x="579.500" y="559.500" width="11" height="11" fill="none" stroke="#7a8aa0" stroke-dasharray="1 1"/><use xlink:href="#dd" x="598" y="564"/>
<rect x="612.500" y="554.500" width="65" height="21" rx="3" fill="#d4e3f4" stroke="#a0b9d6"/><path d="M617 565L623 558L630 565L624 570Z" fill="#eef" stroke="#7a8aa0"/><rect x="615" y="570" width="16" height="4" fill="#ffff00"/><use xlink:href="#dd" x="635" y="564"/>
<text x="656" y="569" class="s" font-size="13" font-weight="bold" fill="#223c6e" text-anchor="middle">A</text><rect x="648" y="570" width="16" height="4" fill="#e00000"/><use xlink:href="#dd" x="668" y="564"/>
<rect x="681.500" y="554.500" width="34" height="21" rx="3" fill="#d4e3f4" stroke="#a0b9d6"/><text x="693" y="562" class="s" font-size="7" fill="#223" text-anchor="middle">wén</text><text x="693" y="574" class="s" font-size="11" fill="#2a50b0" text-anchor="middle">文</text><use xlink:href="#dd" x="706" y="564"/>
<!-- align -->
<rect x="727.500" y="520.500" width="68" height="21" rx="3" fill="#d4e3f4" stroke="#a0b9d6"/><rect x="750" y="521" width="23" height="20" fill="url(#og)"/>
<path d="M733 525H745M733 528H745M733 531H745M756 528H768M756 531H768M756 534H768M779 532H791M779 535H791M779 538H791" stroke="#222"/>
<rect x="799.500" y="520.500" width="32" height="21" rx="3" fill="#d4e3f4" stroke="#a0b9d6"/><path d="M805 536L817 526M808 526L819 535" stroke="#334" stroke-width="1.500"/><use xlink:href="#dd" x="821" y="529"/>
<rect x="844.500" y="517" width="1" height="60" fill="#b0c6e0"/>
<rect x="852.500" y="520.500" width="21" height="21" rx="3" fill="url(#og)" stroke="#b08848"/><rect x="856" y="524" width="13" height="14" fill="#fff" stroke="#555"/>
<rect x="727.500" y="553.500" width="68" height="21" rx="3" fill="#d4e3f4" stroke="#a0b9d6"/><rect x="728" y="554" width="21" height="20" fill="url(#og)"/>
<path d="M733 558H745M733 561H741M733 564H745M733 567H741M733 570H745M756 558H768M758 561H766M756 564H768M758 567H766M756 570H768M779 558H791M783 561H791M779 564H791M783 567H791M779 570H791" stroke="#222"/>
<rect x="799.500" y="553.500" width="44" height="21" rx="3" fill="#d4e3f4" stroke="#a0b9d6"/><path d="M808 558H818M812 562H818M812 566H818M808 570H818M829 558H839M833 562H839M833 566H839M829 570H839" stroke="#222"/><path d="M804 564L809 561V567ZM828 564L833 561V567Z" fill="#2a60c8"/>
<rect x="852.500" y="553.500" width="31" height="21" rx="3" fill="url(#og)" stroke="#b08848"/><rect x="856" y="557" width="15" height="14" fill="#dbe6f4" stroke="#555"/><use xlink:href="#dd" x="875" y="563"/>
<!-- number -->
<rect x="895.500" y="518.500" width="127" height="24" fill="#e8f0fa" stroke="#b2c8e2"/><text x="898" y="534" class="s" font-size="12" fill="#222">常规</text><use xlink:href="#dd" x="1012" y="530"/>
<rect x="895.500" y="554.500" width="79" height="21" rx="3" fill="#d4e3f4" stroke="#a0b9d6"/><rect x="899" y="558" width="14" height="8" fill="#4a78b8"/><circle cx="910" cy="569" r="4" fill="#e8b838"/><use xlink:href="#dd" x="919" y="564"/><text x="940" y="570" class="s" font-size="12" fill="#222" text-anchor="middle">%</text><text x="964" y="570" class="s" font-size="13" font-weight="bold" fill="#222" text-anchor="middle">,</text>
<rect x="978.500" y="554.500" width="44" height="21" rx="3" fill="#d4e3f4" stroke="#a0b9d6"/><text x="990" y="570" class="s" font-size="9" font-weight="bold" fill="#333" text-anchor="middle">.00</text><text x="1011" y="570" class="s" font-size="9" font-weight="bold" fill="#333" text-anchor="middle">.0</text>
<!-- styles -->
<rect x="1038" y="512" width="13" height="14" fill="#dfe7f2" stroke="#5a6f8c"/><rect x="1040" y="514" width="5" height="4" fill="#d84020"/><rect x="1045" y="519" width="5" height="5" fill="#3a5aa0"/>
<rect x="1038" y="535" width="14" height="13" fill="#dfe7f2" stroke="#4a68a0"/><rect x="1038" y="557" width="14" height="11" fill="#dfe7f2" stroke="#4a68a0"/>
<text x="1056" y="523" class="rb">条件格式</text><use xlink:href="#dd" x="1108" y="517"/><text x="1056" y="545" class="rb">套用表格格式</text><use xlink:href="#dd" x="1132" y="539"/><text x="1056" y="567" class="rb">单元格样式</text><use xlink:href="#dd" x="1120" y="561"/>
<!-- cells -->
<path d="M1157 514H1163V518H1157ZM1157 520H1163V524H1157ZM1166 518H1172V521H1166Z" fill="#eef" stroke="#555"/>
<path d="M1157 536H1163V540H1157ZM1157 543H1163V547H1157Z" fill="#eef" stroke="#555"/><path d="M1166 537L1172 543M1172 537L1166 543" stroke="#d04020" stroke-width="2"/>
<rect x="1157" y="556" width="14" height="14" fill="#dfe7f2" stroke="#666" stroke-dasharray="2 1"/>
<text x="1175" y="523" class="rb">插入</text><use xlink:href="#dd" x="1203" y="517"/><text x="1175" y="545" class="rb">删除</text><use xlink:href="#dd" x="1203" y="539"/><text x="1175" y="567" class="rb">格式</text><use xlink:href="#dd" x="1203" y="561"/>
<!-- edit -->
<text x="1234" y="524" class="r" font-size="14" font-weight="bold" fill="#111" text-anchor="middle">Σ</text><use xlink:href="#dd" x="1246" y="517"/>
<rect x="1229" y="534" width="12" height="15" fill="#4a86d8" stroke="#2a50a0"/><path d="M1235 536V545M1232 543L1235 547L1238 543" stroke="#fff" fill="none"/><use xlink:href="#dd" x="1244" y="539"/>
<path d="M1229 565L1237 557L1242 560L1234 568Z" fill="#eee" stroke="#666"/><use xlink:href="#dd" x="1244" y="561"/>
<text x="1267" y="527" class="r" font-size="14" font-weight="bold" fill="#3a5ca8" text-anchor="middle">A</text><text x="1268" y="541" class="r" font-size="14" font-weight="bold" fill="#a03828" text-anchor="middle">Z</text><path d="M1271 517H1291L1283 528V540L1279 538V528Z" fill="#9aa8a0" stroke="#7a8880"/>
<path d="M1306 526L1310 514H1316V538H1306ZM1320 514H1326L1331 526V538H1320Z" fill="#3a4a64"/><rect x="1316" y="520" width="4" height="8" fill="#6a7a94"/>
<text x="1276" y="559" class="rb" text-anchor="middle">排序和</text><text x="1272" y="576" class="rb" text-anchor="middle">筛选</text><use xlink:href="#dd" x="1287" y="570"/><text x="1318" y="559" class="rb" text-anchor="middle">查找和</text><text x="1314" y="576" class="rb" text-anchor="middle">选择</text><use xlink:href="#dd" x="1329" y="570"/>
<!-- formula bar -->
<rect x="408" y="612" width="956" height="20" fill="#8ea6c4"/>
<rect x="409" y="613" width="939" height="18" fill="#fff"/>
<text x="477" y="628" class="s" font-size="13" fill="#222" text-anchor="middle">C23</text><path d="M552 621H560L556 625Z" fill="#111"/>
<rect x="566" y="613" width="76" height="18" rx="9" fill="#cfdff2" stroke="#a0b6d2"/><circle cx="576" cy="622" r="3" fill="#aabbcc"/>
<text x="632" y="627" class="r" font-size="13" font-style="italic" font-weight="bold" fill="#444" text-anchor="middle">fx</text>
<rect x="642" y="613" width="706" height="18" fill="#fff"/>
<text x="654" y="628" class="r" font-size="14.400" fill="#111" textLength="389">非金属有焊盘的按允许漏铜制作，焊盘宽度不足的允许加大</text>
<rect x="1349" y="613" width="15" height="18" fill="#d4e3f4" stroke="#8ea6c4"/><path d="M1353 618L1356.500 621L1360 618M1353 622L1356.500 625L1360 622" fill="none" stroke="#111" stroke-width="1.500"/>
<rect x="408" y="632" width="956" height="4" fill="#c6daf2"/>
<!-- column headers -->
<rect x="409" y="636" width="33" height="19" fill="#c0d3ea"/><path d="M438 639V651H426Z" fill="#e4edf8"/>
<rect x="442" y="636" width="145" height="19" fill="url(#ch)"/><rect x="587" y="636" width="666" height="19" fill="url(#cho)"/><rect x="1253" y="636" width="96" height="19" fill="url(#ch)"/>
<path d="M551 636V655M442 636V655M1253 636V655" stroke="#9eb6ce"/><path d="M587 636V655M698.500 636V655M759.500 636V655M840.500 636V655M912.500 636V655M961.500 636V655M1050.500 636V655" stroke="#e89838"/>
<text x="496" y="653" class="col">A</text><text x="569" y="653" class="col">B</text><text x="642" y="653" class="col">C</text><text x="728" y="653" class="col">D</text><text x="799" y="653" class="col">E</text><text x="876" y="653" class="col">F</text><text x="936" y="653" class="col">G</text><text x="1005" y="653" class="col">H</text><text x="1151" y="653" class="col">I</text><text x="1323" y="653" class="col">J</text>
<!-- grid -->
<rect x="442" y="655" width="907" height="193" fill="#fff"/>
<rect x="409" y="655" width="33" height="193" fill="#dfe9f6"/>
<path d="M409 701.500H442M409 750.500H442M409 799.500H442" stroke="#9eb6ce"/>
<path d="M442 655V848" stroke="#9eb6ce"/>
<text x="424" y="699" class="rh">10</text><text x="424" y="748" class="rh">11</text><text x="424" y="797" class="rh">12</text>
<rect x="588" y="702" width="665" height="48" fill="#ffff00"/>
<path d="M551 701.500H1349M551 750.500H1349M551 799.500H1349" stroke="#000"/>
<path d="M551.500 655V848M587.500 655V848M1253.500 655V848" stroke="#000"/>
<text x="568" y="685" class="num">3</text><text x="568" y="733" class="num">4</text><text x="568" y="782" class="num">5</text><text x="568" y="842" class="num">6</text>
<text x="590" y="683" class="cell" textLength="84">标记加在底层</text>
<text x="590" y="732" class="cell" textLength="371">成品焊环:按IPCIII级,实在不能满足的话,允许局部不满足.</text>
<text x="590" y="780" class="cell" textLength="188">不允许阻焊和字符上开窗焊盘.</text>
<text x="590" y="838" class="cell" textLength="200">需加A/B测试条,要求按附件PDF.</text>
<text x="465" y="854" class="cell" font-size="15" textLength="60">CAM指示</text>
<!-- object -->
<rect x="1263" y="802" width="86" height="46" fill="#fff" stroke="#000"/>
<g stroke="#333" stroke-width="1"><path d="M1263 816L1277 802M1263 826L1287 802M1263 836L1297 802M1263 846L1307 802M1271 848L1317 802M1281 848L1327 802M1291 848L1337 802M1301 848L1347 802M1311 848L1349 810M1321 848L1349 820M1331 848L1349 830M1341 848L1349 840"/></g>
<rect x="1296" y="808" width="21" height="9" fill="#a01020"/><text x="1306" y="816" class="s" font-size="6.500" font-weight="bold" fill="#fff" text-anchor="middle">PDF</text>
<path d="M1310 818L1312 832H1322M1306 832L1316 822" stroke="#c02020" fill="none"/>
<text x="1279" y="846" class="s" font-size="10" fill="#111" stroke="#fff" stroke-width=".3">E:\jys\E</text>
<!-- green highlight -->
<rect x="556" y="658" width="244" height="50" fill="none" stroke="#8aa88a" stroke-width="3" filter="url(#gs)"/>
<rect x="554.500" y="656.500" width="243" height="50" fill="none" stroke="#3ddc3d" stroke-width="3"/>
<!-- scrollbar -->
<rect x="1349" y="636" width="16" height="212" fill="#b3cbe8"/>
<rect x="1350" y="637" width="14" height="7" fill="#d4e3f4" stroke="#8ea6c4"/><rect x="1353" y="640" width="8" height="1.500" fill="#445"/>
<rect x="1350" y="645" width="14" height="16" fill="#9ebde0"/><path d="M1352 656L1357 650L1362 656Z" fill="#2a3a58"/>
<rect x="1350" y="692" width="14" height="80" fill="#cfe0f4" stroke="#8ea6c4"/><path d="M1353 729H1361M1353 732H1361M1353 735H1361" stroke="#7a90ac"/>
<rect x="1365" y="633" width="2" height="215" fill="#5f7088"/>

<!-- taskbar -->
<rect x="0" y="848" width="1600" height="52" fill="#d4d0c8"/>
<rect x="0" y="848" width="1600" height="1" fill="#fff"/>
<g transform="translate(2,852)"><rect width="47" height="21" fill="#d4d0c8" stroke="#666"/><path d="M0 21V0H47" fill="none" stroke="#fff"/><rect x="3" y="3" width="6" height="6" fill="#e8562a"/><rect x="10" y="3" width="6" height="6" fill="#7cba2a"/><rect x="3" y="10" width="6" height="6" fill="#3a80e0"/><rect x="10" y="10" width="6" height="6" fill="#f6c020"/><text x="20" y="16" class="tb" font-size="13.500">开始</text></g>
<circle cx="72" cy="875" r="4" fill="#6ab04a"/><circle cx="81" cy="875" r="4" fill="#4a8ae0"/><circle cx="72" cy="883" r="4" fill="#e88a20"/><circle cx="81" cy="883" r="4" fill="#d84040"/>
<path d="M106.500 854V895" stroke="#888"/><path d="M107.500 854V895" stroke="#fff"/>
<path d="M124 855L139 855L130 863H140L130 873H124L134 866H124Z" fill="#3ca8e0"/>
<path d="M290 856L298 852L300 874H282Z" fill="#e8e8e8"/><path d="M284 866L291 856L292 873Z" fill="#d83020"/><path d="M292 856L298 864L292 873Z" fill="#208830"/>
<use xlink:href="#tbb" x="150" y="852"/><use xlink:href="#tbb" x="313" y="852"/><use xlink:href="#tbb" x="442" y="852"/><use xlink:href="#tbb" x="570" y="852"/><use xlink:href="#tbb" x="700" y="852"/><use xlink:href="#tbb" x="827" y="852"/><use xlink:href="#tbb" x="955" y="852"/><use xlink:href="#tbb" x="1083" y="852"/><use xlink:href="#tbb" x="1212" y="852"/>
<use xlink:href="#tbl" x="116" y="876"/><use xlink:href="#tbl" x="421" y="876"/><use xlink:href="#tbl" x="574" y="876"/><use xlink:href="#tbl" x="728" y="876"/><use xlink:href="#tbl" x="882" y="876"/><use xlink:href="#tbl" x="1036" y="876"/><use xlink:href="#tbl" x="1189" y="876"/>
<rect x="268" y="876" width="152" height="21" fill="#fff"/><path d="M268 897V876H420" fill="none" stroke="#333"/>
<!-- taskbar icons -->
<rect x="157" y="855" width="13" height="16" rx="1" fill="#a8c8e8" stroke="#5a7a9a"/><rect x="159" y="857" width="9" height="4" fill="#e8f0f8"/>
<rect x="318" y="855" width="15" height="16" fill="#2a3a9a"/><rect x="321" y="855" width="9" height="6" fill="#fff"/><rect x="320" y="864" width="11" height="7" fill="#e84040"/>
<path d="M454 854L457 860H463L458 864L460 871L454 867L448 871L450 864L445 860H451Z" fill="#e89030"/>
<circle cx="581" cy="862" r="7" fill="#2a6a9a"/><circle cx="581" cy="862" r="3.500" fill="#8fd8a0"/>
<use xlink:href="#gex" x="704" y="854"/><use xlink:href="#gex" x="831" y="854"/><use xlink:href="#gex" x="959" y="854"/>
<path d="M1089 855H1100L1097 863H1092L1090 871H1086Z" fill="#2aa050"/>
<rect x="1218" y="855" width="11" height="16" fill="#d8e8f8"/><path d="M1219 858H1228M1219 861H1228M1219 864H1228M1219 867H1228" stroke="#3a90d0" stroke-width="1.500"/>
<use xlink:href="#xl" x="120" y="879"/><use xlink:href="#xl" x="272" y="879"/><use xlink:href="#xl" x="425" y="879"/>
<circle cx="586" cy="887" r="6" fill="#2a8a7a"/><circle cx="586" cy="887" r="3" fill="#cfe"/>
<rect x="732" y="879" width="15" height="16" rx="3" fill="#1a70d0"/><text x="739.500" y="892" class="s" font-size="12" font-weight="bold" fill="#fff" text-anchor="middle">F</text>
<path d="M886 879H897L900 882V895H886Z" fill="#fff" stroke="#a02020"/><path d="M888 893C892 888 894 884 892 881C893 886 896 890 899 891" fill="none" stroke="#d02020"/>
<use xlink:href="#tv" x="1040" y="878"/><use xlink:href="#tv" x="1193" y="878"/>
<!-- taskbar text -->
<g class="tb">
<text x="173" y="867">计算器</text>
<text x="337" y="867" textLength="98" lengthAdjust="spacingAndGlyphs">Total Commander ...</text>
<text x="465" y="867" textLength="97" lengthAdjust="spacingAndGlyphs">兴森快捷衡阳分...</text>
<text x="594" y="867">get.exe</text>
<text x="723" y="867" textLength="98" lengthAdjust="spacingAndGlyphs">Engineering Toolki...</text>
<text x="850" y="867">Progress</text>
<text x="977" y="867" textLength="98" lengthAdjust="spacingAndGlyphs">Graphic Editor 9.0...</text>
<text x="1107" y="867" textLength="97" lengthAdjust="spacingAndGlyphs">工程系统  版本...</text>
<text x="1236" y="867" textLength="97" lengthAdjust="spacingAndGlyphs">制作规范 (Ver:1....</text>
<text x="139" y="891" textLength="121" lengthAdjust="spacingAndGlyphs">6V2214VNA0制作单.xl...</text>
<text x="292" y="891" font-weight="bold" fill="#000" textLength="124" lengthAdjust="spacingAndGlyphs">6V2214VNA0-预审指...</text>
<text x="444" y="891" textLength="122" lengthAdjust="spacingAndGlyphs">Q16V2214VNA0(zxt).xl...</text>
<text x="598" y="891" textLength="87" lengthAdjust="spacingAndGlyphs">CAM_Guide v2.59</text>
<text x="751" y="891">卢艳玲</text>
<text x="906" y="891" textLength="120" lengthAdjust="spacingAndGlyphs">Acrobat 文档 - Adobe ...</text>
<text x="1060" y="891">TeamViewer</text>
<text x="1212" y="891" textLength="122" lengthAdjust="spacingAndGlyphs">HY-HYCAM-PC040 - Te...</text>
</g>
<!-- tray -->
<path d="M1350.500 854V895" stroke="#888"/><path d="M1351.500 854V895" stroke="#fff"/>
<rect x="1361" y="860" width="15" height="12" fill="#d8d8d0" stroke="#a0a0a0"/>
<rect x="1364" y="881" width="6" height="5" fill="none" stroke="#111"/><path d="M1362 892L1365 896L1368 892Z" fill="#111"/>
<rect x="1380.500" y="852.500" width="219" height="44" fill="#d4d0c8" stroke="#888"/>
<path d="M1386 864L1389 861L1392 864M1386 868L1389 865L1392 868" fill="none" stroke="#111"/>
<path d="M1404 858L1417 874M1417 858L1404 874" stroke="#4a1a80" stroke-width="3.500"/>
<circle cx="1435" cy="866" r="7" fill="#1a70c8"/><rect x="1433" y="869" width="8" height="5" fill="#60b848"/>
<rect x="1452" y="858" width="10" height="16" rx="5" fill="#111a50"/><path d="M1457 860V872L1460 869L1454 863M1457 860L1460 863L1454 869" stroke="#fff" fill="none"/>
<path d="M1477 859H1488V868L1482.500 874L1477 868Z" fill="#7abc30"/>
<text x="1507" y="874" class="s" font-size="18" font-weight="bold" font-style="italic" fill="#e02818" text-anchor="middle">G</text>
<text x="1550" y="871" class="tb" text-anchor="middle">11:32</text>
<text x="1550" y="893" class="tb" text-anchor="middle">2016/10/26</text>
<rect x="1582" y="869" width="15" height="12" fill="#4a90d8" stroke="#205080"/>
<path d="M1402 891L1408 881L1414 891Z" fill="#d02020"/><path d="M1408 881L1414 891H1408Z" fill="#20a040"/>
<path d="M1428 880H1442L1438 885H1433L1430 896H1426Z" fill="#1a90e8"/>
<rect x="1455" y="880" width="8" height="15" fill="#d8d8d0" stroke="#555"/><rect x="1477" y="880" width="11" height="15" fill="#d8d8d0" stroke="#555"/>
<path d="M1498 885H1501L1505 881V895L1501 891H1498Z" fill="#d8d8d0" stroke="#555"/><path d="M1508 884Q1511 888 1508 892" fill="none" stroke="#777"/>
</svg>
</body></html>
